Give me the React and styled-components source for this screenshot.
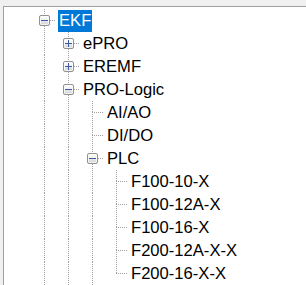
import styled, { createGlobalStyle, css } from "styled-components";

const GlobalStyle = createGlobalStyle`
  html, body {
    margin: 0;
    padding: 0;
    overflow: hidden;
    background: #f0f0f0;
  }
`;

const dotsDown = "repeating-linear-gradient(to bottom, #a0a0a0 0 1px, transparent 1px 2px)";
const dotsRight = "repeating-linear-gradient(to right, #a0a0a0 0 1px, transparent 1px 2px)";

const tree = {
  label: "EKF",
  open: true,
  selected: true,
  prev: true,
  next: true,
  more: true,
  children: [
    { label: "ePRO", children: [] },
    { label: "EREMF", children: [] },
    {
      label: "PRO-Logic",
      open: true,
      more: true,
      children: [
        { label: "AI/AO" },
        { label: "DI/DO" },
        {
          label: "PLC",
          open: true,
          children: [
            { label: "F100-10-X" },
            { label: "F100-12A-X" },
            { label: "F100-16-X" },
            { label: "F200-12A-X-X" },
            { label: "F200-16-X-X" },
          ],
        },
      ],
    },
  ],
};

const Frame = styled.div`
  padding: 6px 0 0 3px;
  height: 100vh;
  box-sizing: border-box;
`;

const Panel = styled.div`
  height: 100%;
  background: #ffffff;
  border-top: 1px solid #a0a0a0;
  border-left: 1px solid #a0a0a0;
  padding: 2px 0 0 28px;
  font-family: "Liberation Sans", Arial, sans-serif;
  font-size: 16.6px;
`;

const Row = styled.div`
  display: flex;
  align-items: center;
  height: 23px;
`;

const Guide = styled.div`
  width: 24px;
  height: 100%;
  flex: none;
  ${(p) =>
    p.$line &&
    css`
      background: ${dotsDown} 12px 0 / 1px 100% no-repeat;
    `}
`;

const Joint = styled.div`
  width: 24px;
  height: 100%;
  flex: none;
  display: flex;
  align-items: center;
  padding-left: 7px;
  box-sizing: border-box;
  background:
    ${dotsRight} 12px 11px / 12px 1px no-repeat,
    ${(p) => (p.$top ? `${dotsDown} 12px 0 / 1px 11px no-repeat,` : "")}
    ${(p) => (p.$bottom ? `${dotsDown} 12px 11px / 1px 12px no-repeat,` : "")}
    transparent;
`;

const Expander = styled.div`
  position: relative;
  width: 11px;
  height: 11px;
  box-sizing: border-box;
  border: 1px solid #919191;
  border-radius: 2px;
  background: linear-gradient(to bottom, #ffffff 0%, #f0f0f0 45%, #cfcfcf 100%);
  box-shadow: inset 0 0 0 1px rgba(255, 255, 255, 0.7);

  &::before {
    content: "";
    position: absolute;
    left: 1px;
    top: 4px;
    width: 7px;
    height: 1px;
    background: #3a5ca6;
  }

  ${(p) =>
    !p.$open &&
    css`
      &::after {
        content: "";
        position: absolute;
        left: 4px;
        top: 1px;
        width: 1px;
        height: 7px;
        background: #3a5ca6;
      }
    `}
`;

const Label = styled.span`
  margin-left: 2px;
  padding: 0 1px;
  height: 22px;
  line-height: 22px;
  white-space: nowrap;
  color: ${(p) => (p.$selected ? "#ffffff" : "#000000")};
  background: ${(p) => (p.$selected ? "#0078d7" : "transparent")};
`;

function Node({ node, guides, isRoot }) {
  const kids = node.children || [];
  const last = isRoot ? !node.next : node.last;
  return (
    <>
      <Row>
        {guides.map((g, i) => (
          <Guide key={i} $line={g} />
        ))}
        <Joint $top={!isRoot || node.prev} $bottom={!last}>
          {node.children && <Expander $open={node.open} />}
        </Joint>
        <Label $selected={node.selected}>{node.label}</Label>
      </Row>
      {node.open &&
        kids.map((child, i) => (
          <Node
            key={child.label}
            node={{ ...child, last: i === kids.length - 1 && !node.more }}
            guides={[...guides, !last]}
          />
        ))}
    </>
  );
}

export default function App() {
  return (
    <>
      <GlobalStyle />
      <Frame>
        <Panel>
          <Node node={tree} guides={[]} isRoot />
        </Panel>
      </Frame>
    </>
  );
}
